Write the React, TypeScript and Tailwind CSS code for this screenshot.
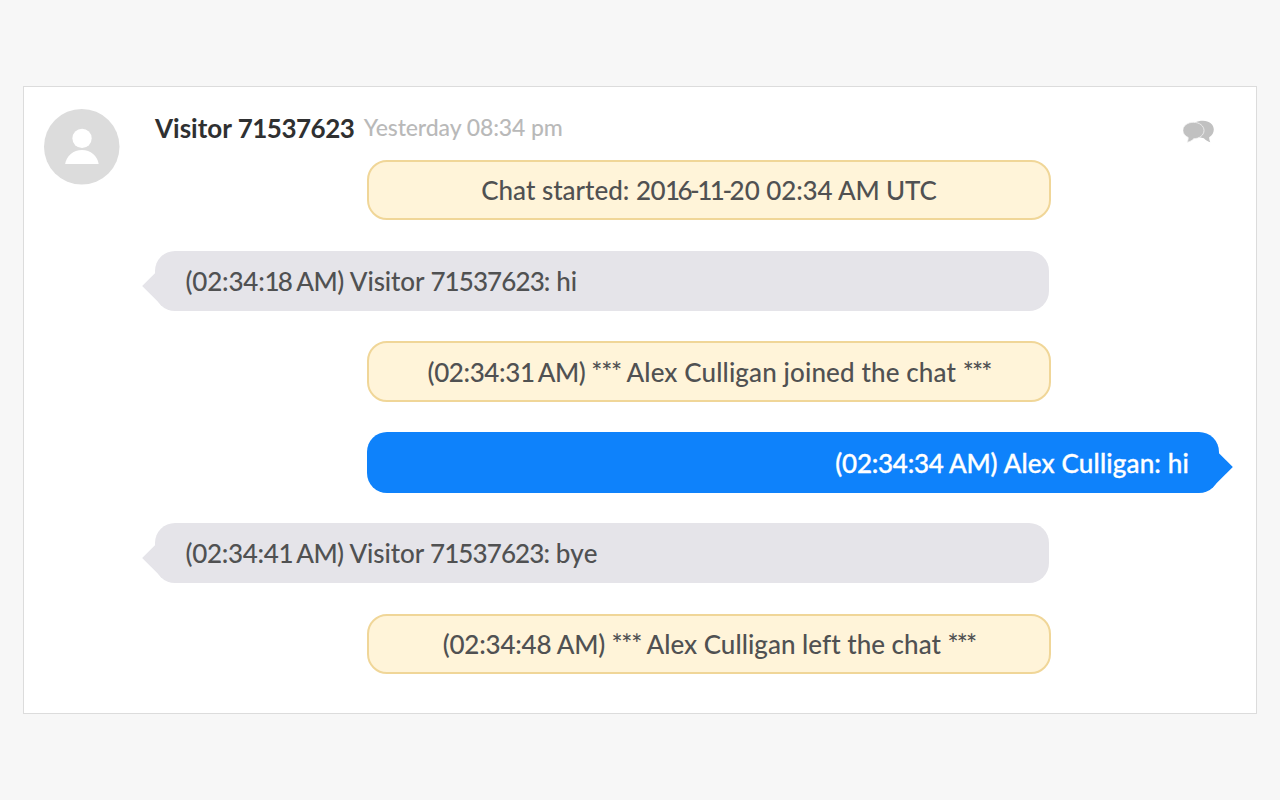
import clsx from "clsx";

type Kind = "system" | "visitor" | "agent";

interface Run {
  text: string;
  spacing: string;
}

interface Message {
  kind: Kind;
  runs: Run[];
}

const messages: Message[] = [
  {
    kind: "system",
    runs: [
      { text: "Chat started: ", spacing: "tracking-[0px]" },
      { text: "20", spacing: "tracking-[-0.6px]" },
      { text: "16-11-", spacing: "tracking-[-2.5px]" },
      { text: "20 ", spacing: "tracking-[0px]" },
      { text: "02:34 AM UTC", spacing: "tracking-[-0.15px]" },
    ],
  },
  {
    kind: "visitor",
    runs: [
      { text: "(02:34:", spacing: "tracking-[-0.2px]" },
      { text: "18", spacing: "tracking-[-1.8px]" },
      { text: " AM) ", spacing: "tracking-[-0.5px]" },
      { text: "Visitor ", spacing: "tracking-[-0.1px]" },
      { text: "71537623", spacing: "tracking-[-0.9px]" },
      { text: ": ", spacing: "tracking-[-0.4px]" },
      { text: "hi", spacing: "tracking-[0px]" },
    ],
  },
  {
    kind: "system",
    runs: [
      { text: "(02:34:3", spacing: "tracking-[-0.4px]" },
      { text: "1", spacing: "tracking-[-2.5px]" },
      { text: " AM) ", spacing: "tracking-[-0.5px]" },
      { text: "*** ", spacing: "tracking-[-1.1px]" },
      { text: "Alex Culligan joined the chat ", spacing: "tracking-[0.13px]" },
      { text: "***", spacing: "tracking-[-1.8px]" },
    ],
  },
  {
    kind: "agent",
    runs: [
      { text: "(02:34:34 AM) ", spacing: "tracking-[-0.25px]" },
      { text: "Alex Culligan: hi", spacing: "tracking-[0.16px]" },
    ],
  },
  {
    kind: "visitor",
    runs: [
      { text: "(02:34:4", spacing: "tracking-[-0.3px]" },
      { text: "1", spacing: "tracking-[-2.5px]" },
      { text: " AM) ", spacing: "tracking-[-0.6px]" },
      { text: "Visitor ", spacing: "tracking-[-0.1px]" },
      { text: "71537623", spacing: "tracking-[-0.9px]" },
      { text: ": ", spacing: "tracking-[-0.4px]" },
      { text: "bye", spacing: "tracking-[0.3px]" },
    ],
  },
  {
    kind: "system",
    runs: [
      { text: "(02:34:48 AM) ", spacing: "tracking-[-0.21px]" },
      { text: "*** ", spacing: "tracking-[-1.2px]" },
      { text: "Alex Culligan left the chat ", spacing: "tracking-[0.03px]" },
      { text: "***", spacing: "tracking-[-1.8px]" },
    ],
  },
];

function Avatar() {
  return (
    <svg className="size-[75.5px] shrink-0" viewBox="0 0 76 76">
      <circle cx="38" cy="38" r="38" fill="#dcdcdc" />
      <circle cx="38.3" cy="29.6" r="9.7" fill="#fff" />
      <path d="M21.3 55.4C22.5 47 29.5 41.2 38.2 41.2S53.9 47 55 55.4Z" fill="#fff" />
    </svg>
  );
}

function ChatIcon() {
  return (
    <svg className="h-[23px] w-[32px]" viewBox="0 0 32 23">
      <path d="M20 0.8C26.2 0.8 30.8 4.6 30.8 9.6C30.8 12.8 29.1 15.6 26.2 17.2C26.2 19 26.5 20.4 27.3 22.3C24.5 21.4 22.3 20 20.9 18.3L15 17L12 2.5C14.200 1.300 17 0.800 20 0.800Z" fill="#c1c1c1" />
      <path d="M10.300 2.300C16.500 2.300 21 5.900 21 10.500C21 15.200 16.300 18.700 10.800 18.700C9.100 20.500 7 21.700 4.100 22.300C4.900 20.600 5.200 19.200 5.200 17.500C2 16 -0.100 13.400 -0.100 10.500C-0.100 5.900 4.500 2.300 10.300 2.300Z" fill="#c1c1c1" stroke="#f4f4f4" strokeWidth="0.8" />
    </svg>
  );
}

function Bubble({ kind, runs }: Message) {
  return (
    <div
      className={clsx(
        "relative flex h-[60.5px] items-center rounded-[20px] text-[26px] leading-none font-medium whitespace-pre [font-variant-ligatures:none]",
        kind === "system" && "ml-[212px] w-[684px] justify-center border-2 border-[#f0d698] bg-[#fff4d9] text-[#505152]",
        kind === "visitor" && "w-[894px] bg-[#e5e4e9] pl-[30.5px] text-[#505152]",
        kind === "agent" && "ml-[212px] w-[852px] justify-end bg-[#0e82fb] pt-[1px] pr-[30px] text-white [-webkit-text-stroke:0.35px_white]",
      )}
    >
      {kind === "visitor" && <span className="absolute top-[21px] -left-[7.2px] size-7 rotate-45 bg-[#e5e4e9]" />}
      {kind === "agent" && <span className="absolute top-[21px] -right-[8px] size-7 rotate-45 bg-[#0e82fb]" />}
      <p className="relative">
        {runs.map((run, index) => (
          <span key={index} className={run.spacing}>
            {run.text}
          </span>
        ))}
      </p>
    </div>
  );
}

export default function App() {
  return (
    <main className="h-[800px] w-[1280px] bg-[#f7f7f7] px-[23px] pt-[86px] font-['Lato',sans-serif]">
      <section className="flex h-[628px] border border-[#dcdcdc] bg-white pt-[22px] pl-[20px]">
        <Avatar />
        <div className="ml-[35.5px] flex flex-1 flex-col">
          <header className="flex h-[50.75px] items-start pr-[41px] whitespace-nowrap">
            <h1 className="pt-[3px] text-[26px] leading-8 font-bold text-[#2f3031]">
              Visitor <span className="tracking-[-0.5px]">71537623</span>
            </h1>
            <span className="ml-[9.5px] pt-[2px] text-[23px] leading-8 font-medium tracking-[-0.1px] text-[#b9b9b9]">
              Yesterday 08:34 pm
            </span>
            <span className="mt-[11px] ml-auto">
              <ChatIcon />
            </span>
          </header>
          <div className="flex flex-col gap-[30.25px]">
            {messages.map((message, index) => (
              <Bubble key={index} {...message} />
            ))}
          </div>
        </div>
      </section>
    </main>
  );
}
